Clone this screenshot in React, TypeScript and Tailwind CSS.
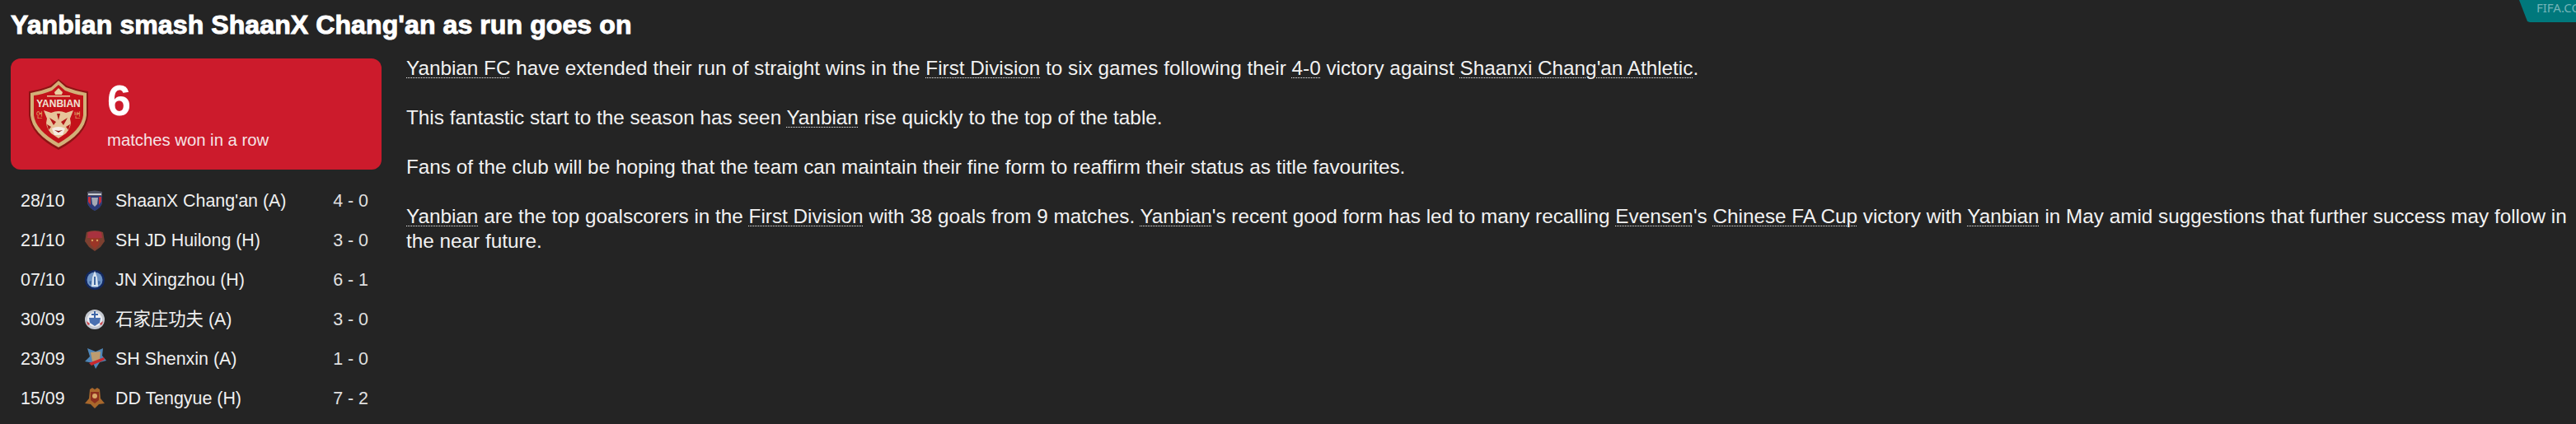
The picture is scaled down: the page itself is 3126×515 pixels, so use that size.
const results = [
  { date: "28/10", team: "ShaanX Chang'an (A)", score: "4 - 0", crest: "shaanxi" },
  { date: "21/10", team: "SH JD Huilong (H)", score: "3 - 0", crest: "huilong" },
  { date: "07/10", team: "JN Xingzhou (H)", score: "6 - 1", crest: "xingzhou" },
  { date: "30/09", team: "石家庄功夫 (A)", score: "3 - 0", crest: "kungfu" },
  { date: "23/09", team: "SH Shenxin (A)", score: "1 - 0", crest: "shenxin" },
  { date: "15/09", team: "DD Tengyue (H)", score: "7 - 2", crest: "tengyue" },
];

function Link({ children }: { children: React.ReactNode }) {
  return (
    <span className="underline decoration-dotted decoration-1 underline-offset-[3px]">
      {children}
    </span>
  );
}

function YanbianCrest() {
  return (
    <svg width="76" height="86" viewBox="0 0 76 86" className="shrink-0">
      <path d="M38 0 L48 8 Q60 13 74 15 L74 44 Q72 68 38 86 Q4 68 2 44 L2 15 Q16 13 28 8 Z" fill="#8c1414" />
      <path d="M38 2 L47 10 Q60 15 72 17 L72 44 Q70 66 38 83 Q6 66 4 44 L4 17 Q16 15 29 10 Z" fill="#d2b078" />
      <path d="M38 7 L46 14 Q58 19 68 20 L68 44 Q66 62 38 78 Q10 62 8 44 L8 20 Q18 19 30 14 Z" fill="#c4121a" />
      <path d="M33 16 L38 11 L43 16 L42 19 L34 19 Z" fill="#e8cfa0" />
      <rect x="24" y="20" width="28" height="1.5" fill="#e8cfa0" />
      <text x="38" y="34" textAnchor="middle" fontFamily="Liberation Sans, sans-serif" fontWeight="700" fontSize="12" fill="#f0e4d4">
        YANBIAN
      </text>
      <text x="15" y="47" textAnchor="middle" fontFamily="Noto Sans CJK KR, sans-serif" fontSize="9" fill="#e0a868">연</text>
      <text x="61" y="47" textAnchor="middle" fontFamily="Noto Sans CJK KR, sans-serif" fontSize="9" fill="#e0a868">변</text>
      <path d="M20 38 L29 41 Q38 37 47 41 L56 38 L52 48 Q55 57 47 66 L38 72 L29 66 Q21 57 24 48 Z" fill="#e7c49a" />
      <path d="M27 47 L35 52 L32 56 Z M49 47 L41 52 L44 56 Z M36 42 L38 50 L40 42 Z M24 55 L29 58 L26 62 Z M52 55 L47 58 L50 62 Z" fill="#b01818" />
      <path d="M30 60 Q38 56 46 60 L43 68 L33 68 Z" fill="#f5ece2" />
      <path d="M33 62 L38 65 L43 62 L38 63 Z" fill="#8c1414" />
    </svg>
  );
}

function Crest({ name }: { name: string }) {
  if (name === "shaanxi") {
    return (
      <svg width="24" height="26" viewBox="0 0 24 26">
        <path d="M3 2 Q12 -1 21 2 L21 15 Q20 21 12 25 Q4 21 3 15 Z" fill="#4e5160" />
        <path d="M3 7 L21 7 L21 15 Q20 21 12 25 Q4 21 3 15 Z" fill="#2b3a78" />
        <path d="M4 8 L7 8 L7 18 L4 14 Z M17 8 L20 8 L20 14 L17 18 Z" fill="#c62f38" />
        <path d="M8 9 L16 9 L15 17 L12 20 L9 17 Z" fill="#a5a9b5" />
        <rect x="4" y="4" width="16" height="2" fill="#c9ccd4" />
      </svg>
    );
  }
  if (name === "huilong") {
    return (
      <svg width="24" height="26" viewBox="0 0 24 26">
        <path d="M2 3 Q12 -1 22 3 L24 14 L19 21 L12 26 L5 21 L0 14 Z" fill="#7c4030" />
        <path d="M4 3 Q12 1 20 3 L21 10 L3 10 Z" fill="#a8323f" />
        <path d="M6 10 L18 10 L17 18 L12 23 L7 18 Z" fill="#9b3526" />
        <circle cx="9" cy="13" r="1.2" fill="#d9a060" />
        <circle cx="15" cy="13" r="1.2" fill="#d9a060" />
      </svg>
    );
  }
  if (name === "xingzhou") {
    return (
      <svg width="24" height="26" viewBox="0 0 24 26">
        <circle cx="12" cy="13" r="12" fill="#12285f" />
        <circle cx="12" cy="13" r="9.5" fill="#6f94c4" />
        <path d="M12 2 L15 10 L16 21 L8 21 L9 10 Z" fill="#d6e2ef" />
        <path d="M11 9 L13 9 L13 19 L11 19 Z M5 15 L8 14 L8 19 L6 18 Z M19 15 L16 14 L16 19 L18 18 Z" fill="#3d66a0" />
      </svg>
    );
  }
  if (name === "kungfu") {
    return (
      <svg width="24" height="26" viewBox="0 0 24 26">
        <circle cx="12" cy="13" r="12" fill="#c4c8d0" />
        <circle cx="12" cy="13" r="9" fill="#eef0f4" />
        <path d="M5 11 L19 11 L18 17 L12 21 L6 17 Z" fill="#4a70b0" />
        <path d="M11 3 L13 3 L13 6 L16 6 L16 8 L13 8 L13 11 L11 11 L11 8 L8 8 L8 6 L11 6 Z" fill="#3f66a8" />
        <path d="M2 15 L6 18 L5 20 L3 19 Z M22 15 L18 18 L19 20 L21 19 Z" fill="#c9484e" />
      </svg>
    );
  }
  if (name === "shenxin") {
    return (
      <svg width="26" height="26" viewBox="0 0 26 26">
        <path d="M13 4 L22 0 L21 9 L26 15 L18 17 L13 25 L10 18 L0 16 L6 10 L3 0 Z" fill="#4f86b8" />
        <path d="M7 5 L19 4 L18 15 L9 16 Z" fill="#bd9c6f" />
        <path d="M5 18 L23 11 L24 14 L8 21 Z" fill="#c9282e" />
      </svg>
    );
  }
  return (
    <svg width="24" height="26" viewBox="0 0 24 26">
      <path d="M6 2 L9 0 L12 2 L15 0 L18 2 L19 13 L24 19 L17 20 L12 25 L7 20 L0 19 L5 13 Z" fill="#a9682c" />
      <path d="M7 5 L17 5 L17 15 L12 19 L7 15 Z" fill="#8c2f1e" />
      <circle cx="12" cy="10" r="3" fill="#d9a868" />
    </svg>
  );
}

export default function App() {
  return (
    <div className="relative h-[515px] w-[3126px] overflow-hidden bg-[#242424] font-['Liberation_Sans','Noto_Sans_CJK_SC',sans-serif] text-white">
      <h1 className="px-[13px] pt-[10px] text-[32px] leading-[40px] font-bold tracking-[0.1px] [-webkit-text-stroke:1px_white]">
        Yanbian smash ShaanX Chang'an as run goes on
      </h1>

      <div className="mt-[18px] flex gap-[30px] pl-[13px]">
        <div className="w-[450px] shrink-0 pt-[3px]">
          <div className="flex h-[135px] items-center gap-[21px] rounded-[12px] bg-[#cc1b2c] pl-[20px]">
            <YanbianCrest />
            <div>
              <div className="text-[52px] leading-[52px] font-bold">6</div>
              <div className="mt-[10px] text-[20.3px] leading-[24px] text-[#f6e4e6]">matches won in a row</div>
            </div>
          </div>

          <div className="mt-[14px]">
            {results.map((r) => (
              <div key={r.date} className="flex h-[48px] items-center pl-[12px] pr-[16px] text-[21.4px]">
                <span className="w-[78px] text-[#f0f0f0]">{r.date}</span>
                <span className="flex w-[37px]">
                  <Crest name={r.crest} />
                </span>
                <span className="flex-1 text-[#f0f0f0]">{r.team}</span>
                <span className="text-[#e0e0e0]">{r.score}</span>
              </div>
            ))}
          </div>
        </div>

        <div className="flex-1 pr-[4px] text-[24.3px] leading-[30px] text-[#f2f2f2]">
          <p>
            <Link>Yanbian FC</Link> have extended their run of straight wins in the <Link>First Division</Link> to six
            games following their <Link>4-0</Link> victory against <Link>Shaanxi Chang'an Athletic</Link>.
          </p>
          <p className="mt-[30px]">
            This fantastic start to the season has seen <Link>Yanbian</Link> rise quickly to the top of the table.
          </p>
          <p className="mt-[30px]">
            Fans of the club will be hoping that the team can maintain their fine form to reaffirm their status as title
            favourites.
          </p>
          <p className="mt-[30px]">
            <Link>Yanbian</Link> are the top goalscorers in the <Link>First Division</Link> with 38 goals from 9 matches.{" "}
            <Link>Yanbian</Link>'s recent good form has led to many recalling <Link>Evensen</Link>'s{" "}
            <Link>Chinese FA Cup</Link> victory with <Link>Yanbian</Link> in May amid suggestions that further success
            may follow in the near future.
          </p>
        </div>
      </div>

      <div className="absolute top-0 right-0 h-[27px] w-[69px] overflow-hidden bg-[#00787c] pl-[21px] font-['Noto_Sans',sans-serif] text-[15px] leading-[18px] whitespace-nowrap text-[#74b4b8] [clip-path:polygon(0_0,100%_0,100%_100%,13px_100%,10px_96%)]">
        FIFA.COM
      </div>
    </div>
  );
}
